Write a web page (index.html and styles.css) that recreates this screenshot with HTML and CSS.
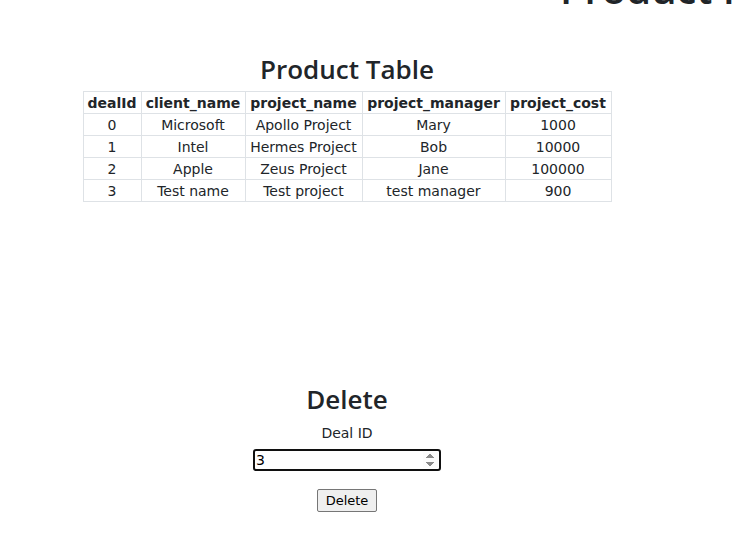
FILE: index.html
```html
<!DOCTYPE html>
<html>
<head>
<meta charset="utf-8">
<link rel="stylesheet" href="styles.css">
</head>
<body>
<header class="topbar">
  <h1 class="top-title">Product Insert</h1>
</header>
<main class="page">
  <section class="table-section">
    <h2 class="section-title">Product Table</h2>
    <table class="product-table">
      <colgroup>
        <col class="c1"><col class="c2"><col class="c3"><col class="c4"><col class="c5">
      </colgroup>
      <thead>
        <tr><th>dealId</th><th>client_name</th><th>project_name</th><th>project_manager</th><th>project_cost</th></tr>
      </thead>
      <tbody>
        <tr><td>0</td><td>Microsoft</td><td>Apollo Project</td><td>Mary</td><td>1000</td></tr>
        <tr><td>1</td><td>Intel</td><td>Hermes Project</td><td>Bob</td><td>10000</td></tr>
        <tr><td>2</td><td>Apple</td><td>Zeus Project</td><td>Jane</td><td>100000</td></tr>
        <tr><td>3</td><td>Test name</td><td>Test project</td><td>test manager</td><td>900</td></tr>
      </tbody>
    </table>
  </section>
  <section class="delete-section">
    <h2 class="section-title">Delete</h2>
    <label class="field-label" for="dealId">Deal ID</label>
    <div class="input-wrap">
      <input id="dealId" class="num-input" type="number" value="3" autofocus>
    </div>
    <button class="btn" type="button">Delete</button>
  </section>
</main>
</body>
</html>
```
FILE: styles.css
```css
html, body {
  margin: 0;
  padding: 0;
  overflow: hidden;
  background: #fff;
}
body {
  font-family: "DejaVu Sans", Verdana, sans-serif;
  color: #212529;
}
.topbar {
  display: flex;
  height: 0;
  padding-left: 560px;
  white-space: nowrap;
}
.top-title {
  margin: -35px 0 0 0;
  font-family: "Open Sans", "Noto Sans", sans-serif;
  font-weight: 600;
  font-size: 40px;
  line-height: 48px;
  color: #212529;
}
.page {
  width: 694px;
  text-align: center;
}
.table-section {
  padding-top: 51px;
  height: 282px;
}
.section-title {
  margin: 0 0 4px 0;
  font-family: "Open Sans", "Noto Sans", sans-serif;
  font-weight: 600;
  font-size: 26px;
  line-height: 36px;
  color: #212529;
}
.product-table {
  margin: 0 auto;
  border-collapse: collapse;
  table-layout: fixed;
  width: 528px;
  font-size: 14px;
}
.c1 { width: 58px; }
.c2 { width: 104px; }
.c3 { width: 117px; }
.c4 { width: 143px; }
.c5 { width: 106px; }
.product-table th,
.product-table td {
  border: 1px solid #dee2e6;
  height: 21px;
  padding: 0 1px;
  text-align: center;
  white-space: nowrap;
  overflow: hidden;
}
.product-table th {
  font-weight: bold;
}
.delete-section {
  display: flex;
  flex-direction: column;
  align-items: center;
  padding-top: 48px;
}
.field-label {
  font-size: 14px;
  margin-top: 2px;
  line-height: 20px;
}
.input-wrap {
  margin-top: 6px;
}
.num-input {
  box-sizing: border-box;
  width: 188px;
  height: 22px;
  border: 2px solid #101010;
  border-radius: 3px;
  padding: 0 1px;
  font-family: "DejaVu Sans", Verdana, sans-serif;
  font-size: 14px;
  color: #000;
  outline: none;
}
.btn {
  margin-top: 18px;
  font-family: "DejaVu Sans", Verdana, sans-serif;
  font-size: 13px;
  color: #000;
  background: #efefef;
  border: 1px solid #767676;
  border-radius: 2px;
  padding: 2px 8px;
  height: 23px;
}
```
